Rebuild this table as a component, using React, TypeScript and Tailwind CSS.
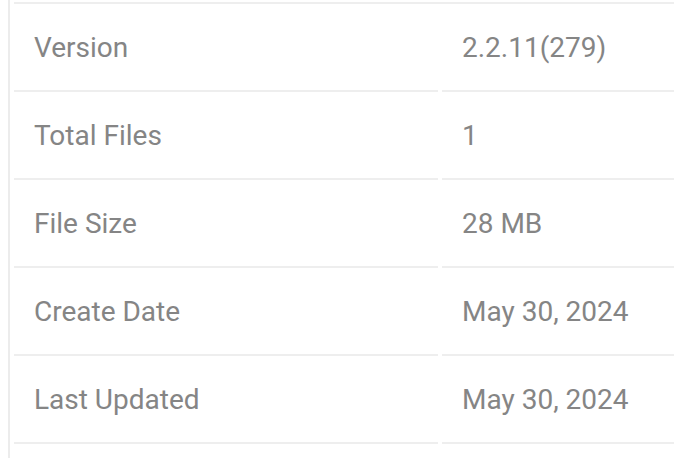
const rows = [
  { label: 'Version', value: '2.2.11(279)' },
  { label: 'Total Files', value: '1' },
  { label: 'File Size', value: '28 MB' },
  { label: 'Create Date', value: 'May 30, 2024' },
  { label: 'Last Updated', value: 'May 30, 2024' }
]

export default function App() {
  return (
    <div className="h-[458px] w-[674px] overflow-hidden bg-white font-['Roboto',sans-serif]">
      <div className="ml-[8px] h-full border-l-2 border-[#ececec] pl-[4px] pt-[2px]">
        <div className="grid grid-cols-[424px_1fr] gap-x-[4px] border-t-2 border-[#eeeeee]">
          {rows.map((r) => (
            <div key={r.label} className="contents">
              <div className="flex h-[88px] items-center border-b-2 border-[#eeeeee] pl-[20px] pt-[2px] text-[28px] text-[#858585]">
                {r.label}
              </div>
              <div className="flex h-[88px] items-center border-b-2 border-[#eeeeee] pl-[20px] pt-[2px] text-[28px] text-[#858585]">
                {r.value}
              </div>
            </div>
          ))}
        </div>
      </div>
    </div>
  )
}
